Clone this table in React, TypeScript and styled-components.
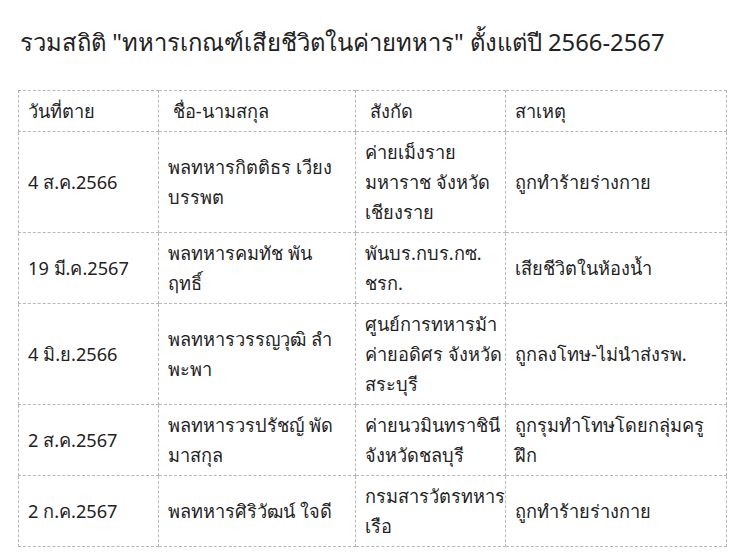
import * as React from "react";
import styled, { createGlobalStyle } from "styled-components";

const GlobalStyle = createGlobalStyle`
  body {
    margin: 0;
    background: #ffffff;
    font-family: "Noto Sans", "DejaVu Sans", sans-serif;
    color: #222222;
  }
`;

const Page = styled.div`
  padding: 22px 18px 12px 18px;
`;

const Title = styled.h2`
  margin: 0 0 28px 2px;
  font-size: 23.8px;
  font-weight: 400;
  line-height: 40px;
  color: #222222;
`;

const Table = styled.table`
  width: 708px;
  border-collapse: collapse;
  table-layout: fixed;
  font-size: 18.2px;
  line-height: 30px;
`;

const Col = styled.col<{ $width: number }>`
  width: ${(p) => p.$width}px;
`;

const Cell = styled.td`
  border: 1px dashed #b8b8b8;
  padding: 5px 9px;
  vertical-align: middle;
  text-align: left;
  white-space: pre;
`;

const HeadCell = styled(Cell).attrs({ as: "th" })`
  font-weight: 400;
`;

interface Row {
  date: string;
  name: string;
  unit: string;
  cause: string;
}

// line breaks follow the original wrapping
const rows: Row[] = [
  {
    date: "4 ส.ค.2566",
    name: "พลทหารกิตติธร เวียง\nบรรพต",
    unit: "ค่ายเม็งราย\nมหาราช จังหวัด\nเชียงราย",
    cause: "ถูกทำร้ายร่างกาย",
  },
  {
    date: "19 มี.ค.2567",
    name: "พลทหารคมทัช พัน\nฤทธิ์",
    unit: "พันบร.กบร.กซ.\nชรก.",
    cause: "เสียชีวิตในห้องน้ำ",
  },
  {
    date: "4 มิ.ย.2566",
    name: "พลทหารวรรญวุฒิ ลำ\nพะพา",
    unit: "ศูนย์การทหารม้า\nค่ายอดิศร จังหวัด\nสระบุรี",
    cause: "ถูกลงโทษ-ไม่นำส่งรพ.",
  },
  {
    date: "2 ส.ค.2567",
    name: "พลทหารวรปรัชญ์ พัด\nมาสกุล",
    unit: "ค่ายนวมินทราชินี\nจังหวัดชลบุรี",
    cause: "ถูกรุมทำโทษโดยกลุ่มครู\nฝึก",
  },
  {
    date: "2 ก.ค.2567",
    name: "พลทหารศิริวัฒน์ ใจดี",
    unit: "กรมสารวัตรทหาร\nเรือ",
    cause: "ถูกทำร้ายร่างกาย",
  },
];

export default function App() {
  return (
    <>
      <GlobalStyle />
      <Page>
        <Title>รวมสถิติ "ทหารเกณฑ์เสียชีวิตในค่ายทหาร" ตั้งแต่ปี 2566-2567</Title>
        <Table>
          <colgroup>
            <Col $width={140} />
            <Col $width={197} />
            <Col $width={150} />
            <Col $width={221} />
          </colgroup>
          <thead>
            <tr>
              <HeadCell>วันที่ตาย</HeadCell>
              <HeadCell> ชื่อ-นามสกุล</HeadCell>
              <HeadCell> สังกัด</HeadCell>
              <HeadCell>สาเหตุ</HeadCell>
            </tr>
          </thead>
          <tbody>
            {rows.map((r) => (
              <tr key={r.date + r.name}>
                <Cell>{r.date}</Cell>
                <Cell>{r.name}</Cell>
                <Cell>{r.unit}</Cell>
                <Cell>{r.cause}</Cell>
              </tr>
            ))}
          </tbody>
        </Table>
      </Page>
    </>
  );
}
